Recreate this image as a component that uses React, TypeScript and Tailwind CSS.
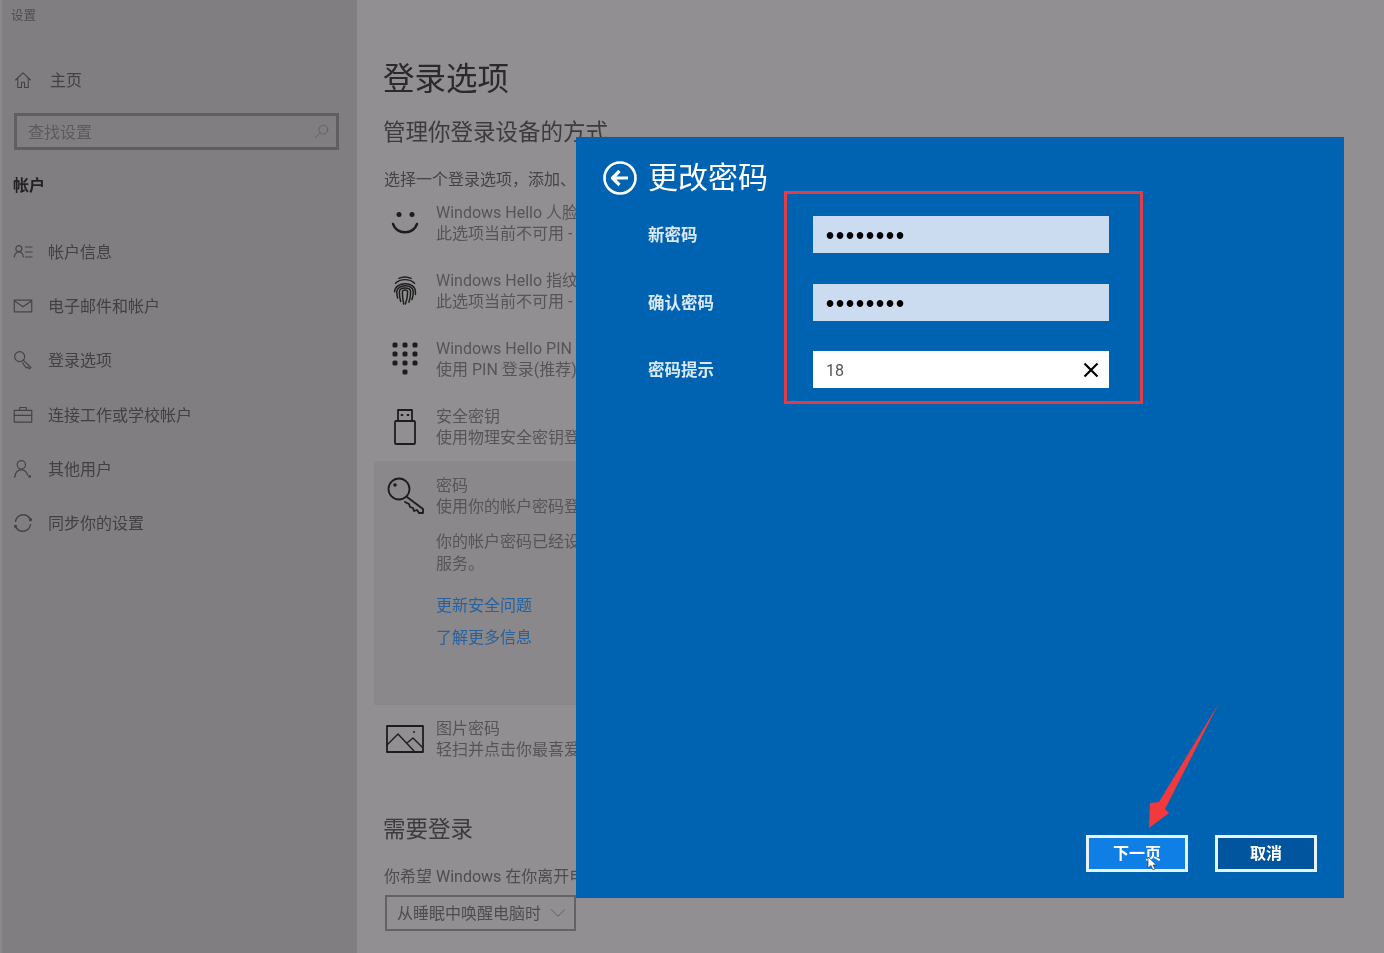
import type { ReactNode } from 'react';

const FONT = "font-['Roboto','Noto_Sans_CJK_SC',sans-serif]";

function Glyph({ className, children, box = '0 0 24 24' }: { className: string; children: ReactNode; box?: string }) {
  return (
    <svg className={className} viewBox={box} fill="none" stroke="currentColor" strokeWidth={1.4} strokeLinecap="round" strokeLinejoin="round">
      {children}
    </svg>
  );
}

const NAV_ITEMS: { label: string; icon: ReactNode }[] = [
  {
    label: '帐户信息',
    icon: (
      <>
        <circle cx="7" cy="8" r="3.6" />
        <path d="M1.5 18c.6-3.8 2.6-6 5.5-6s4.9 2.2 5.5 6M15 6h8M15 12h8M15 18h8" />
      </>
    ),
  },
  {
    label: '电子邮件和帐户',
    icon: (
      <>
        <rect x="1.5" y="5" width="21" height="14" />
        <path d="M2 6l10 7 10-7" />
      </>
    ),
  },
  {
    label: '登录选项',
    icon: (
      <>
        <circle cx="8" cy="8" r="6" />
        <path d="M12.5 12.5l9 8.5-2 1.5-2-2-1.5 1-1.5-2-1-1-2-3.500" />
      </>
    ),
  },
  {
    label: '连接工作或学校帐户',
    icon: (
      <>
        <rect x="1.500" y="6.500" width="21" height="14" />
        <path d="M8 6.500V3h8v3.500M1.500 12.500h21" />
      </>
    ),
  },
  {
    label: '其他用户',
    icon: (
      <>
        <circle cx="10" cy="7" r="5" />
        <path d="M2 22c.6-5.500 3.800-9 8-9 3.500 0 6.500 2.500 7.500 6.500" />
        <circle cx="20" cy="21" r="1" />
      </>
    ),
  },
  {
    label: '同步你的设置',
    icon: (
      <>
        <path strokeWidth={1.700} d="M3 10a9.500 9.500 0 0 1 17-4l1 1" />
        <path strokeWidth={1.700} d="M21 14a9.500 9.500 0 0 1-17 4l-1-1" />
        <circle cx="21" cy="8" r="1.200" fill="currentColor" />
        <circle cx="3" cy="16" r="1.200" fill="currentColor" />
      </>
    ),
  },
];

function Sidebar() {
  return (
    <aside className="w-[357px] shrink-0 bg-[#807e80] text-[#424142] border-l-2 border-[#8b898b]">
      <p className="h-[20px] pl-[9px] mt-[6px] text-[12.500px] leading-[20px] text-[#4e4d4e]">设置</p>
      <div className="flex items-center h-[30px] mt-[40px] pl-[13px]">
        <Glyph className="w-[18px] h-[18px] -translate-x-px -translate-y-px">
          <path d="M2 12L12 2.500 22 12M5 9.500V22h5v-7h4v7h5V9.500" />
        </Glyph>
        <span className="ml-[17px] text-[16px]">主页</span>
      </div>
      <div className="flex items-center justify-between w-[325px] h-[37px] ml-[12px] mt-[17px] border-[3px] border-[#5f5e60] pl-[11px] pr-[7px]">
        <span className="text-[16px] text-[#5c5b5c] translate-y-px">查找设置</span>
        <Glyph className="w-[15px] h-[15px] text-[#605f60]">
          <circle cx="15" cy="9" r="7" />
          <path d="M10 14l-8 8" />
        </Glyph>
      </div>
      <p className="ml-[11px] mt-[26px] h-[22px] text-[16px] leading-[20px] font-bold text-[#232223]">帐户</p>
      <nav className="mt-[28px] flex flex-col">
        {NAV_ITEMS.map((item) => (
          <div key={item.label} className="flex items-center h-[54.200px] pl-[11px]">
            <span className="w-[35px] shrink-0 -translate-y-px">
              <Glyph className="w-[20px] h-[20px] text-[#454445]">{item.icon}</Glyph>
            </span>
            <span className="text-[16px] whitespace-nowrap">{item.label}</span>
          </div>
        ))}
      </nav>
    </aside>
  );
}

function OptionRow({ icon, title, sub }: { icon: ReactNode; title: string; sub: string }) {
  return (
    <div className="flex w-[192px] h-[68px] pt-[13px] whitespace-nowrap overflow-hidden">
      <div className="w-[52px] shrink-0 h-[42px] flex items-center justify-center pr-[10px] text-[#1e1d1e]">{icon}</div>
      <div className="text-[16px] leading-[21px] text-[#565556]">
        <p>{title}</p>
        <p>{sub}</p>
      </div>
    </div>
  );
}

function SignInPanel() {
  return (
    <main className="flex-1 bg-[#918f91] pl-[27px] overflow-hidden">
      <h1 className="mt-[57px] h-[46px] text-[31.500px] leading-[46px] font-normal text-[#2b2a2b] -translate-x-px">登录选项</h1>
      <h2 className="mt-[12px] h-[34px] text-[22.500px] leading-[34px] font-normal text-[#3c3b3c] whitespace-nowrap -translate-x-px">管理你登录设备的方式</h2>
      <p className="mt-[19px] w-[192px] h-[24px] text-[16px] leading-[24px] text-[#454445] whitespace-nowrap overflow-hidden">选择一个登录选项，添加、</p>
      <div className="-mt-[3px]">
        <OptionRow
          title="Windows Hello 人脸"
          sub="此选项当前不可用 -"
          icon={
            <Glyph className="w-[30px] h-[30px]" box="0 0 30 30">
              <circle cx="9" cy="6.500" r="2.500" fill="currentColor" stroke="none" />
              <circle cx="22" cy="6.500" r="2.500" fill="currentColor" stroke="none" />
              <path strokeWidth={2.400} d="M3 16c4 11 20 11 24 0" />
            </Glyph>
          }
        />
        <OptionRow
          title="Windows Hello 指纹"
          sub="此选项当前不可用 -"
          icon={
            <Glyph className="w-[26px] h-[32px]" box="0 0 30 36">
              <path
                strokeWidth={1.700}
                d="M8 3.500c4-2 10-2 14 0M4 9c6-5.500 16-5.500 22 0M3 19c0-12 24-13 24 0v3M6.500 26c-1-3-1-5-1-7 0-9 19-10 19 0 0 4-.500 7-1.500 9M10 30c-1-3-1.500-6-1.500-11 0-6 13-6 13 0 0 5-.500 8-2 12M13.500 33c-1-4-1.500-9-1.500-14 0-3 6-3 6 0 0 5-.500 9-2.500 14"
              />
            </Glyph>
          }
        />
        <OptionRow
          title="Windows Hello PIN"
          sub="使用 PIN 登录(推荐)"
          icon={
            <svg className="w-[26px] h-[34px]" viewBox="0 0 26 34" fill="currentColor">
              {[3, 13, 23].flatMap((x) => [3, 12, 21].map((y) => <rect key={`${x}-${y}`} x={x - 2.500} y={y - 2.500} width="5" height="5" rx="1.500" />))}
              <rect x="10.500" y="27.500" width="5" height="5" rx="1.500" />
            </svg>
          }
        />
        <OptionRow
          title="安全密钥"
          sub="使用物理安全密钥登录"
          icon={
            <Glyph className="w-[24px] h-[38px]" box="0 0 24 38">
              <path strokeWidth={1.800} d="M3 13h18a1 1 0 0 1 1 1v21a1 1 0 0 1-1 1H3a1 1 0 0 1-1-1V14a1 1 0 0 1 1-1zM5 13V2h14v11M8.500 7h1M14.500 7h1" />
            </Glyph>
          }
        />
      </div>
      <section className="-ml-[10px] w-[202px] h-[244px] pl-[10px] pt-[14px] bg-[#8a888a] whitespace-nowrap overflow-hidden">
        <div className="flex">
          <div className="w-[52px] shrink-0 pl-[3px] pt-[2px] text-[#1e1d1e]">
            <Glyph className="w-[38px] h-[38px]" box="0 0 38 38">
              <circle cx="12" cy="12" r="10.500" strokeWidth={1.800} />
              <circle cx="8" cy="8" r="1.800" fill="currentColor" stroke="none" />
              <path strokeWidth={1.800} d="M20 20l16 12v4h-4l-2-3-3 1-1-3-3-1-1-3-4-2" />
            </Glyph>
          </div>
          <div className="text-[16px] leading-[21px] text-[#565556]">
            <p>密码</p>
            <p>使用你的帐户密码登录</p>
          </div>
        </div>
        <div className="pl-[52px] text-[16px] text-[#565556]">
          <div className="mt-[14px] leading-[22px]">
            <p>你的帐户密码已经设</p>
            <p>服务。</p>
          </div>
          <p className="mt-[19px] leading-[24px] text-[#27619f]">更新安全问题</p>
          <p className="mt-[8px] leading-[24px] text-[#27619f]">了解更多信息</p>
        </div>
      </section>
      <OptionRow
        title="图片密码"
        sub="轻扫并点击你最喜爱的"
        icon={
          <Glyph className="w-[38px] h-[30px]" box="0 0 38 30">
            <rect x="1" y="2" width="36" height="26" strokeWidth={1.800} />
            <path strokeWidth={1.400} d="M1 21l11-11 16 17M21 19l6-5 9 9" />
            <circle cx="28" cy="8" r="1" fill="currentColor" stroke="none" />
          </Glyph>
        }
      />
      <h2 className="mt-[39px] h-[34px] text-[22.500px] leading-[34px] font-normal text-[#3c3b3c] -translate-x-px">需要登录</h2>
      <p className="mt-[19px] w-[192px] h-[24px] text-[16px] leading-[24px] text-[#4e4d4e] whitespace-nowrap overflow-hidden">你希望 Windows 在你离开电脑</p>
      <div className="mt-[6px] flex items-center justify-between w-[191px] h-[36px] ml-px border-[2px] border-[#636264] pl-[10px] pr-[8px]">
        <span className="text-[16px] text-[#4e4d4e] whitespace-nowrap translate-y-px">从睡眠中唤醒电脑时</span>
        <Glyph className="w-[16px] h-[16px] text-[#5c5b5c]">
          <path d="M2 7l10 10L22 7" />
        </Glyph>
      </div>
    </main>
  );
}

function PasswordField({ label, value, plain = false }: { label: string; value: string; plain?: boolean }) {
  return (
    <div className="flex items-center h-[37px]">
      <label className="w-[165px] shrink-0 text-[16.500px] font-bold text-[#dbe8f5] translate-y-[1.500px]">{label}</label>
      <div className={`flex items-center justify-between w-[296px] h-[37px] pl-[13px] pr-[10px] ${plain ? 'bg-white' : 'bg-[#cbdcf0]'}`}>
        {plain ? (
          <span className="text-[16px] text-[#555] translate-y-px">{value}</span>
        ) : (
          <span className="font-['Liberation_Sans',sans-serif] font-bold text-[23px] tracking-[1.950px] text-black translate-y-0.5">{value}</span>
        )}
        {plain && (
          <svg className="w-[16px] h-[16px] text-black" viewBox="0 0 16 16" fill="none" stroke="currentColor" strokeWidth={2.200}>
            <path d="M1.500 1.500l13 13M14.500 1.500l-13 13" />
          </svg>
        )}
      </div>
    </div>
  );
}

function ChangePasswordDialog() {
  return (
    <div className="absolute left-[576px] top-[137px] w-[768px] h-[761px] bg-[#0063b1] flex flex-col justify-between">
      <div>
        <div className="flex items-center h-[40px] mt-[21px] pl-[27px]">
          <svg className="w-[34px] h-[34px] text-white" viewBox="0 0 34 34" fill="none" stroke="currentColor">
            <circle cx="17" cy="17" r="15.500" strokeWidth={2.600} />
            <path strokeWidth={3.200} strokeLinejoin="round" d="M25 17H10M16.500 10l-7 7 7 7" />
          </svg>
          <h1 className="ml-[11px] text-[30px] leading-[40px] font-normal text-white">更改密码</h1>
        </div>
        <div className="mt-[18px] pl-[72px] flex flex-col gap-[30.500px]">
          <PasswordField label="新密码" value="••••••••" />
          <PasswordField label="确认密码" value="••••••••" />
          <PasswordField label="密码提示" value="18" plain />
        </div>
      </div>
      <div className="flex justify-end gap-[27px] pr-[27px] pb-[26px]">
        <button className="w-[102px] h-[37px] border-[3px] border-[#e8f2fb] bg-[#0f7fe6] pt-px text-[16px] font-bold text-white">下一页</button>
        <button className="w-[102px] h-[37px] border-[3px] border-[#e8f2fb] bg-[#00559e] pt-px text-[16px] font-bold text-white">取消</button>
      </div>
      {/* annotation box round the fields */}
      <div className="absolute left-[208px] top-[54px] w-[359px] h-[213px] border-[3px] border-[#e23c46]" />
      {/* annotation arrow and mouse pointer */}
      <svg className="absolute left-[568px] top-[565px] w-[80px] h-[130px]" viewBox="0 0 80 130">
        <path fill="#f23a3c" d="M75 1L15 100 6 101 5 126 25 111 21 107z" />
      </svg>
      <svg className="absolute left-[571px] top-[719px] w-[10px] h-[15px]" viewBox="0 0 10 15">
        <path fill="#fff" stroke="#1a2a3a" strokeWidth={0.6} d="M1 1v11l3-2.500 2 4.500 2-1-2-4h3.500z" />
      </svg>
    </div>
  );
}

export default function App() {
  return (
    <div className={`relative flex w-[1384px] h-[953px] overflow-hidden blur-[0.5px] ${FONT}`}>
      <Sidebar />
      <SignInPanel />
      <ChangePasswordDialog />
    </div>
  );
}
